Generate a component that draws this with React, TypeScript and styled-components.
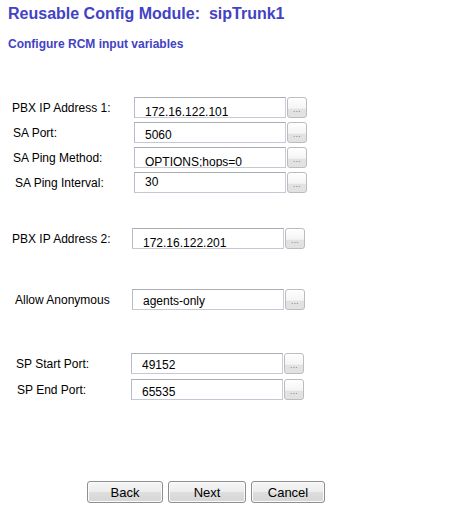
import styled, { createGlobalStyle } from "styled-components";

const GlobalStyle = createGlobalStyle`
  html, body {
    margin: 0;
    padding: 0;
    background: #fff;
  }
  body {
    font-family: "Liberation Sans", Arial, sans-serif;
  }
`;

const Page = styled.div`
  width: 452px;
  height: 511px;
  box-sizing: border-box;
  padding-top: 4px;
  overflow: hidden;
`;

const Title = styled.h1`
  margin: 0 0 0 8px;
  font-size: 16px;
  line-height: 19px;
  font-weight: bold;
  color: #4242c4;
  white-space: pre;
`;

const Subtitle = styled.h2`
  margin: 14px 0 0 8px;
  font-size: 12px;
  line-height: 14px;
  font-weight: bold;
  color: #4242c4;
`;

const Section = styled.div<{ $top: number; $gap: number }>`
  display: flex;
  flex-direction: column;
  gap: ${(p) => p.$gap}px;
  margin-top: ${(p) => p.$top}px;
`;

const Row = styled.div<{ $inputX: number }>`
  display: grid;
  grid-template-columns: ${(p) => p.$inputX}px 152px 20px;
  column-gap: 1px;
  align-items: center;
  height: 21px;
`;

const Label = styled.label<{ $indent: number }>`
  padding-left: ${(p) => p.$indent}px;
  font-size: 12px;
  color: #000;
  white-space: nowrap;
`;

// $drop moves the value text down (positive) or up (negative) inside the box
const Field = styled.input<{ $drop: number }>`
  box-sizing: border-box;
  width: 152px;
  height: 21px;
  margin: 0;
  padding: ${(p) => Math.max(p.$drop, 0)}px 0 ${(p) => Math.max(-p.$drop, 0)}px 10px;
  border: 1px solid #abadb3;
  border-left-color: #b8bccc;
  border-right-color: #c9ccdb;
  border-bottom-color: #c5c9d6;
  background: #fff;
  font-family: "Liberation Sans", Arial, sans-serif;
  font-size: 12px;
  color: #000;
  outline: none;
`;

const Browse = styled.button`
  box-sizing: border-box;
  width: 20px;
  height: 21px;
  margin: 0;
  padding: 0 0 3px;
  border: 1px solid #bcbcbc;
  border-radius: 3px;
  background: linear-gradient(
    to bottom,
    #ffffff 0%,
    #f4f4f4 55%,
    #e2e2e2 56%,
    #e2e2e2 100%
  );
  display: flex;
  align-items: flex-end;
  justify-content: center;
  font-family: "Liberation Sans", Arial, sans-serif;
  font-size: 8px;
  line-height: 8px;
  letter-spacing: 0.5px;
  color: #555;
  cursor: pointer;
`;

const Actions = styled.div`
  display: flex;
  gap: 5px;
  margin-top: 81px;
  padding-left: 87px;
`;

const ActionButton = styled.button<{ $width: number }>`
  box-sizing: border-box;
  width: ${(p) => p.$width}px;
  height: 22px;
  margin: 0;
  padding: 0;
  border: 1px solid #8e8e8e;
  border-radius: 3px;
  background: linear-gradient(
    to bottom,
    #f6f6f6 0%,
    #ececec 50%,
    #dedede 51%,
    #d6d6d6 100%
  );
  box-shadow: inset 0 0 0 1px #fbfbfb;
  font-family: "Liberation Sans", Arial, sans-serif;
  font-size: 13px;
  color: #000;
  cursor: pointer;
`;

type FieldDef = {
  label: string;
  value: string;
  indent: number;
  drop: number;
};

const sections: { top: number; gap: number; inputX: number; fields: FieldDef[] }[] = [
  {
    top: 46,
    gap: 4,
    inputX: 133,
    fields: [
      { label: "PBX IP Address 1:", value: "172.16.122.101", indent: 12, drop: 8 },
      { label: "SA Port:", value: "5060", indent: 13, drop: 5 },
      { label: "SA Ping Method:", value: "OPTIONS;hops=0", indent: 13, drop: 9 },
      { label: "SA Ping Interval:", value: "30", indent: 15, drop: -1 },
    ],
  },
  {
    top: 35,
    gap: 4,
    inputX: 131,
    fields: [
      { label: "PBX IP Address 2:", value: "172.16.122.201", indent: 12, drop: 8 },
    ],
  },
  {
    top: 40,
    gap: 4,
    inputX: 131,
    fields: [
      { label: "Allow Anonymous", value: "agents-only", indent: 15, drop: 2 },
    ],
  },
  {
    top: 43,
    gap: 5,
    inputX: 130,
    fields: [
      { label: "SP Start Port:", value: "49152", indent: 16, drop: 3 },
      { label: "SP End Port:", value: "65535", indent: 17, drop: 5 },
    ],
  },
];

export default function App() {
  return (
    <>
      <GlobalStyle />
      <Page>
        <Title>{"Reusable Config Module:  sipTrunk1"}</Title>
        <Subtitle>Configure RCM input variables</Subtitle>

        {sections.map((s, i) => (
          <Section key={i} $top={s.top} $gap={s.gap}>
            {s.fields.map((f) => (
              <Row key={f.label} $inputX={s.inputX}>
                <Label $indent={f.indent}>{f.label}</Label>
                <Field $drop={f.drop} defaultValue={f.value} readOnly />
                <Browse type="button">...</Browse>
              </Row>
            ))}
          </Section>
        ))}

        <Actions>
          <ActionButton $width={76}>Back</ActionButton>
          <ActionButton $width={78}>Next</ActionButton>
          <ActionButton $width={74}>Cancel</ActionButton>
        </Actions>
      </Page>
    </>
  );
}
